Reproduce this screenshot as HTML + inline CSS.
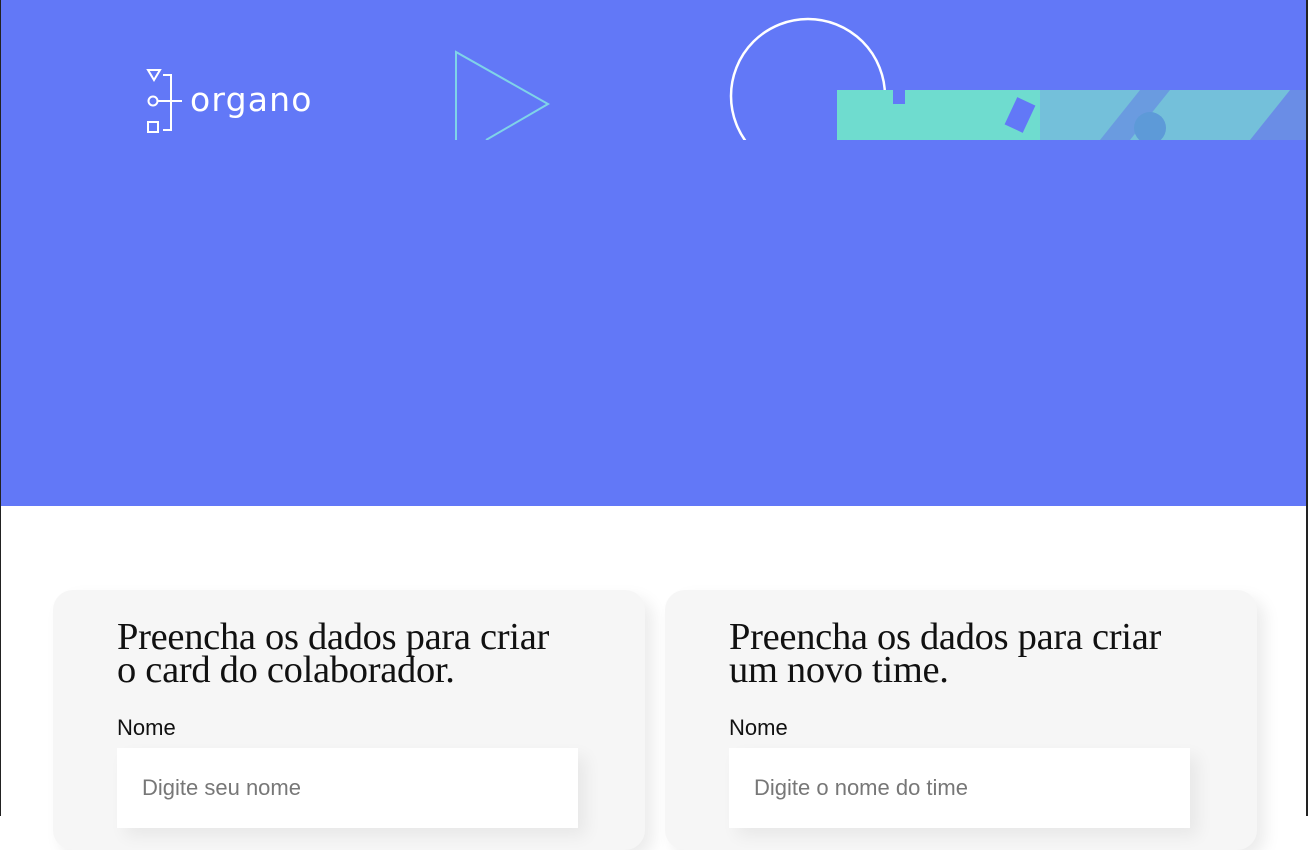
<!DOCTYPE html>
<html><head><meta charset="utf-8"><style>
html,body{margin:0;padding:0}
body{width:1308px;height:816px;overflow:hidden;background:#fff;position:relative;font-family:"Liberation Sans",sans-serif}
.frame{position:absolute;inset:0;border-left:1px solid #222;border-right:2px solid #222;pointer-events:none;z-index:5}
.banner{position:absolute;left:0;top:0;width:1308px;height:506px;background:#6278F7;overflow:hidden}
.card{position:absolute;top:590px;width:592px;height:260px;background:#F6F6F6;border-radius:20px;box-shadow:8px 8px 16px rgba(0,0,0,.08)}
.card h2{position:absolute;left:64px;top:31px;margin:0;font-family:"Liberation Serif",serif;font-weight:400;font-size:38.5px;line-height:33px;color:#111;width:455px;letter-spacing:-0.3px}
.card label{position:absolute;left:64px;top:125px;font-size:22px;color:#111}
.card .in{position:absolute;left:64px;top:158px;width:461px;height:80px;background:#fff;box-shadow:8px 8px 16px rgba(0,0,0,.06)}
.card .in span{position:absolute;left:25px;top:27px;font-size:22px;color:#777}
</style></head><body>
<div class="banner">
<svg width="1308" height="140" style="position:absolute;left:0;top:0">
<g fill="none" stroke="#fff" stroke-width="2">
<path d="M148 70 L160 70 L154 80 Z"/>
<path d="M163 75 L171 75 L171 130 L163 130"/>
<circle cx="153" cy="101" r="4.5"/>
<path d="M158 101 L182 101"/>
<rect x="148" y="122" width="10" height="10"/>
</g>
<text x="190" y="111" fill="#fff" font-family="DejaVu Sans, sans-serif" font-size="33" letter-spacing="1.2">organo</text>
<path d="M456 140 L456 52 L548 104 L486 140" fill="none" stroke="#7fd3e8" stroke-width="2"/>
<circle cx="808" cy="96" r="77" fill="none" stroke="#fff" stroke-width="2.5"/>
<rect x="837" y="90" width="471" height="50" fill="#6fdccf"/>
<rect x="1040" y="90" width="268" height="50" fill="#74c0da"/>
<path d="M1100 140 L1140 90 L1170 90 L1130 140Z" fill="#6a9be0"/>
<path d="M1250 140 L1290 90 L1308 90 L1308 140 Z" fill="#6a8de6"/>
<rect x="1010" y="100" width="20" height="30" fill="#6278F7" transform="rotate(25 1020 115)"/>
<rect x="893" y="90" width="12" height="14" fill="#6278F7"/>
<circle cx="1150" cy="128" r="16" fill="#5d9ad8"/>
</svg>
</div>
<div class="card" style="left:53px"><h2>Preencha os dados para criar o card do colaborador.</h2><label>Nome</label><div class="in"><span>Digite seu nome</span></div></div>
<div class="card" style="left:665px"><h2>Preencha os dados para criar um novo time.</h2><label>Nome</label><div class="in"><span>Digite o nome do time</span></div></div>
<div class="frame"></div>
</body></html>
